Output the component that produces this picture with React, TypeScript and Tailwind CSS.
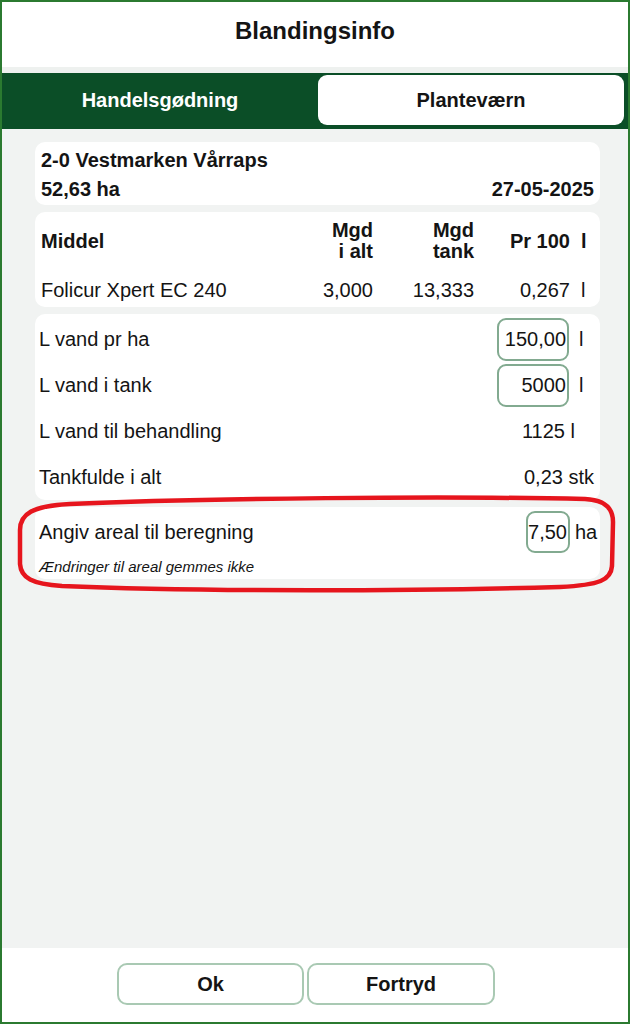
import React from "react";

export default function App() {
  return (
    <div className="relative w-[630px] h-[1024px] border-2 border-[#2b7a30] bg-white flex flex-col font-['Liberation_Sans',Arial,sans-serif] text-[#141414] overflow-hidden">
      {/* Header */}
      <div className="h-[65px] flex justify-center pt-[15px] bg-white">
        <h1 className="text-[24px] leading-[28px] font-bold">Blandingsinfo</h1>
      </div>
      <div className="h-[6px] bg-[#eef1ef]" />
      {/* Tabs */}
      <div className="h-[56px] bg-[#0b4e27] flex">
        <div className="w-[316px] flex items-center justify-center text-white text-[20px] leading-[24px] font-bold pb-[2px]">
          Handelsgødning
        </div>
        <div className="mt-[2px] h-[50px] w-[306px] bg-white rounded-[9px] flex items-center justify-center text-[20px] leading-[24px] font-bold">
          Planteværn
        </div>
      </div>
      {/* Content */}
      <div className="flex-1 bg-[#f1f3f2] pl-[33px] pr-[28px] pt-[13px] flex flex-col gap-[7px]">
        {/* Card 1 */}
        <div className="bg-white rounded-[10px] px-[6px] pt-[6px] pb-[4px] flex flex-col gap-[5px] text-[20px] leading-[24px] font-bold">
          <div>2-0 Vestmarken Vårraps</div>
          <div className="flex justify-between">
            <span>52,63 ha</span>
            <span>27-05-2025</span>
          </div>
        </div>
        {/* Card 2 */}
        <div className="bg-white rounded-[10px] pl-[6px] pr-[6px] pt-[8px] pb-[5px] text-[20px]">
          <div className="grid grid-cols-[1fr_100px_101px_96px_24px] items-center font-bold leading-[21px]">
            <div>Middel</div>
            <div className="text-right">Mgd<br />i alt</div>
            <div className="text-right">Mgd<br />tank</div>
            <div className="text-right">Pr 100</div>
            <div className="pl-[11px]">l</div>
          </div>
          <div className="grid grid-cols-[1fr_100px_101px_96px_24px] items-center leading-[24px] mt-[16px]">
            <div>Folicur Xpert EC 240</div>
            <div className="text-right">3,000</div>
            <div className="text-right">13,333</div>
            <div className="text-right">0,267</div>
            <div className="pl-[11px]">l</div>
          </div>
        </div>
        {/* Card 3 */}
        <div className="bg-white rounded-[10px] pl-[4px] pt-[2px] text-[20px] leading-[24px] flex flex-col">
          <div className="h-[46px] flex items-center justify-between">
            <span>L vand pr ha</span>
            <div className="flex items-center">
              <div className="w-[72px] h-[43px] border-2 border-[#82aa90] rounded-[9px] flex items-center justify-end pr-[1px]">
                150,00
              </div>
              <span className="w-[31px] pl-[10px]">l</span>
            </div>
          </div>
          <div className="h-[46px] flex items-center justify-between">
            <span>L vand i tank</span>
            <div className="flex items-center">
              <div className="w-[72px] h-[43px] border-2 border-[#82aa90] rounded-[9px] flex items-center justify-end pr-[1px]">
                5000
              </div>
              <span className="w-[31px] pl-[10px]">l</span>
            </div>
          </div>
          <div className="h-[46px] flex items-center justify-between pr-[25px]">
            <span>L vand til behandling</span>
            <span>1125 l</span>
          </div>
          <div className="h-[46px] flex items-center justify-between pr-[6px]">
            <span>Tankfulde i alt</span>
            <span>0,23 stk</span>
          </div>
        </div>
        {/* Card 4 */}
        <div className="bg-white rounded-[10px] pl-[4px] pt-[4px] pb-[3px] flex flex-col">
          <div className="flex items-center justify-between text-[20px] leading-[24px]">
            <span>Angiv areal til beregning</span>
            <div className="flex items-center">
              <div className="w-[44px] h-[42px] border-2 border-[#82aa90] rounded-[9px] flex items-center justify-end pr-[1px]">
                7,50
              </div>
              <span className="w-[30px] pl-[5px]">ha</span>
            </div>
          </div>
          <div className="mt-[5px] text-[15px] leading-[18px] italic">Ændringer til areal gemmes ikke</div>
        </div>
      </div>
      {/* Footer */}
      <div className="h-[74px] bg-white flex pl-[115px] pt-[15px] gap-[3px]">
        <button className="w-[187px] h-[42px] border-2 border-[#a9c9b3] rounded-[10px] bg-white text-[20px] font-bold leading-[24px]">
          Ok
        </button>
        <button className="w-[188px] h-[42px] border-2 border-[#a9c9b3] rounded-[10px] bg-white text-[20px] font-bold leading-[24px]">
          Fortryd
        </button>
      </div>
      {/* Red annotation */}
      <svg
        className="absolute left-[-2px] top-[-2px] pointer-events-none"
        width="630"
        height="1024"
        viewBox="0 0 630 1024"
      >
        <path
          d="M 70 504 C 200 498, 450 496, 585 499 C 606 500, 613 509, 613 522 L 612 566 C 611 580, 600 585, 560 587 C 420 591, 200 592, 62 586 C 32 584, 21 578, 20 564 L 20 530 C 20 514, 32 506, 70 504 Z"
          fill="none"
          stroke="#e6151d"
          strokeWidth="4.5"
        />
      </svg>
    </div>
  );
}
